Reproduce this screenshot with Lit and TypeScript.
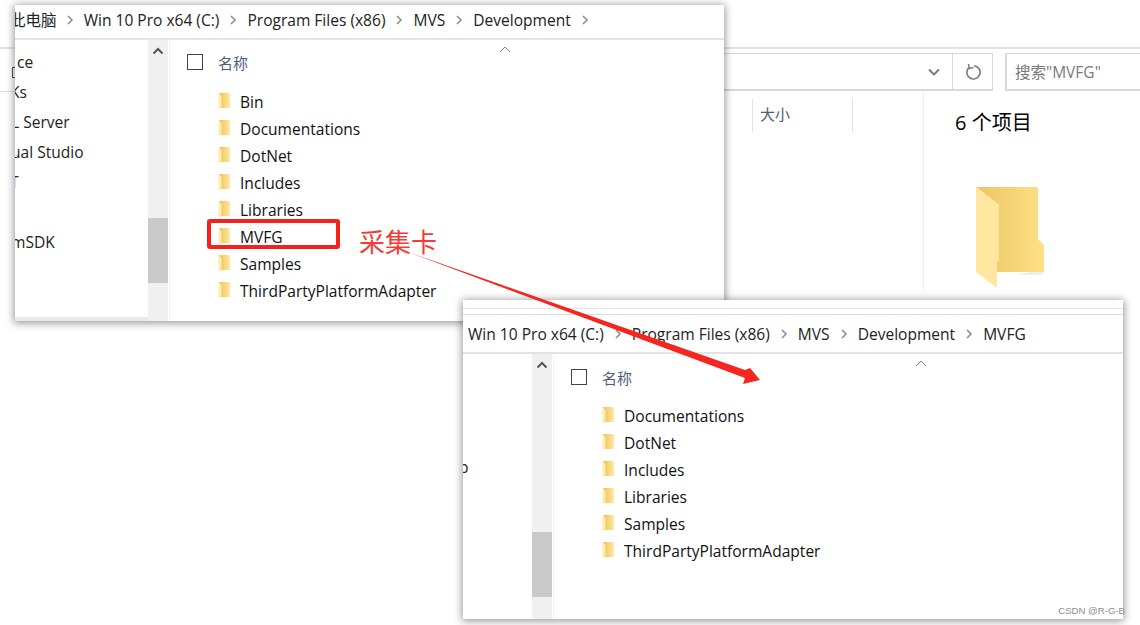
import { LitElement, html, css, svg } from "lit";
import { customElement } from "lit/decorators.js";

const smallFolder = html`<svg class="sf" viewBox="0 0 12 18" width="12" height="18">
  <defs><linearGradient id="sfg" x1="0" x2="1" y1="0" y2="0"><stop offset="0" stop-color="#edc04e"/><stop offset="1" stop-color="#ffe9a6"/></linearGradient></defs>
  <path d="M1 1 L11 1 L12 2 L12 16 L3 16 L3 5 Z" fill="url(#sfg)"/>
  <path d="M0.5 1 L3.5 4 L3.5 16 L2.5 16 L2.5 18 L0.5 16.5 Z" fill="#ffeab0"/>
</svg>`;

const chevron = html`<svg class="chev" viewBox="0 0 8 10" width="8" height="10"><path d="M2 1 L6 5 L2 9" fill="none" stroke="#8a8a8a" stroke-width="1.5"/></svg>`;
const upArrow = html`<svg viewBox="0 0 12 8" width="12" height="8"><path d="M1.5 6.5 L6 2 L10.5 6.5" fill="none" stroke="#555" stroke-width="2"/></svg>`;

@customElement("app-root")
export class AppRoot extends LitElement {
  static styles = css`
    :host { display: block; width: 1140px; height: 625px; position: relative; overflow: hidden; background: #fff;
      font-family: "Open Sans", "Noto Sans CJK SC", sans-serif; color: #1a1a1a; }
    .bg { position: absolute; inset: 0; display: flex; flex-direction: column; }
    .bg-top { height: 47px; flex: none; border-bottom: 2px solid #e3e3e3; box-sizing: content-box; }
    .bg-tools { height: 38px; margin-top: 4px; flex: none; display: flex; gap: 12px; padding-left: 724px; }
    .addr { width: 269px; flex: none; display: flex; justify-content: flex-end; border: 1px solid #d9d9d9; border-left: 0; box-sizing: border-box; border-width: 1px 1px 2px 0; }
    .addr-btn { width: 39px; display: flex; align-items: center; justify-content: center; }
    .addr-btn.d { padding-left: 3px; box-sizing: border-box; }
    .addr-btn.r { border-left: 1px solid #d9d9d9; }
    .search { flex: 1; border: 1px solid #d9d9d9; border-width: 1px 0 2px 2px; display: flex; align-items: center; padding-left: 8px; font-size: 15.5px; color: #7a7a7a; }
    .bg-body { flex: 1; display: flex; padding-left: 724px; }
    .cols { width: 200px; flex: none; border-right: 1px solid #f0f0f0; height: 200px; padding-top: 8px; box-sizing: border-box; display: flex; }
    .col-sep { height: 33px; border-left: 1px solid #e3e3e3; box-sizing: border-box; }
    .col-a { width: 28px; } .col-b { width: 100px; font-size: 15px; line-height: 18px; color: #4c607a; padding: 6px 0 0 7px; }
    .col-c { width: 60px; }
    .details { padding: 17px 0 0 31px; display: flex; flex-direction: column; }
    .count { font-size: 20px; line-height: 30px; color: #000; height: 55px; }
    .big { margin: 24px 0 0 21px; display: block; }

    .win { position: absolute; background: #fff; box-shadow: 0 1px 8px 1px rgba(0,0,0,.42); display: flex; flex-direction: column; overflow: hidden; }
    .a { left: 15px; top: 5px; width: 709px; height: 316px; }
    .b { left: 463px; top: 300px; width: 660px; height: 319px; }
    .stripes { height: 15px; flex: none; border-bottom: 1px solid #dcdcdc; position: relative; box-sizing: border-box; }
    .stripes::before { content: ""; position: absolute; left: 0; right: 0; top: 8px; height: 1px; background: #e4e4e4; }
    .crumbs { flex: none; display: flex; align-items: center; white-space: nowrap; font-size: 15.55px; border-bottom: 2px solid #e3e3e3; box-sizing: border-box; color: #222; gap: 10px; }
    .a .crumbs { height: 35px; padding-bottom: 4px; }
    .a .crumbs span:first-child { margin-left: -5px; margin-right: -1px; }
    .b .crumbs { height: 39px; padding-left: 5px; }
    .chev { flex: none; }
    .body { flex: 1; min-height: 0; display: flex; }
    .nav { flex: none; overflow: hidden; position: relative; font-size: 15.55px; color: #222; box-sizing: border-box; }
    .a .nav { width: 133px; border-bottom: 4px solid #e9e9e9; padding-top: 7px; }
    .b .nav { width: 69px; padding-top: 98px; }
    .nav div { height: 30px; line-height: 30px; white-space: nowrap; }
    .nav .c1 { margin-left: 2px; }
    .nav .c2 { margin-left: -4px; }
    .nav .c3 { margin-left: -5px; }
    .sb { flex: none; width: 20px; background: #f0f0f0; display: flex; flex-direction: column; align-items: center; border-right: 1px solid #fff; }
    .sb-arrow { height: 22px; display: flex; align-items: center; justify-content: center; flex: none; }
    .thumb { width: 100%; height: 65px; background: #c9c9c9; flex: none; }
    .a .thumb { margin-top: 156px; }
    .b .thumb { margin-top: 156px; }
    .list { flex: 1; min-width: 0; border-left: 1px solid #f2f2f2; position: relative; }
    .head { display: flex; align-items: center; padding-left: 17px; gap: 15px; font-size: 15px; color: #4c607a; position: relative; }
    .a .head { height: 44px; }
    .b .head { height: 46px; }
    .check { width: 16px; height: 16px; border: 1px solid #444; box-sizing: border-box; flex: none; }
    .sort { position: absolute; line-height: 0; top: 6px; }
    .a .sort { left: 329px; }
    .b .sort { left: 361px; }
    .rows { padding-left: 48px; }
    .a .rows { padding-top: 4px; }
    .b .rows { padding-top: 2px; }
    .row { height: 27px; display: flex; align-items: center; gap: 10px; font-size: 15.55px; color: #111; white-space: nowrap; }
    .sf { flex: none; margin-top: -1px; }

    .mark { position: absolute; left: 207px; top: 219px; width: 133px; height: 30px; border: 4px solid #f5211c; border-radius: 3px; box-sizing: border-box; }
    .note { position: absolute; left: 359px; top: 223px; font-size: 26px; line-height: 36px; color: #f43c36; font-family: "Noto Sans CJK SC", sans-serif; font-weight: 400; }
    .arrow { position: absolute; left: 0; top: 0; pointer-events: none; }
    .wm { position: absolute; right: 15px; top: 605px; font-size: 9.6px; color: #8c8c8c; font-family: "Liberation Sans", sans-serif; white-space: nowrap; }
    .stub { position: absolute; left: 0; top: 47px; width: 15px; height: 45px; border-bottom: 1px solid #dcdcdc; box-sizing: border-box; }
    .stub::after { content: ""; position: absolute; left: 12px; top: 20px; width: 3px; height: 11px; border-left: 1px solid #555; border-top: 1px solid #555; border-bottom: 1px solid #555; box-sizing: border-box; }
  `;

  crumbs(items: string[], endChevron: boolean) {
    return items.map((t, i) => html`<span>${t}</span>${i < items.length - 1 || endChevron ? chevron : ""}`);
  }

  rows(items: string[]) {
    return items.map((t) => html`<div class="row">${smallFolder}<span>${t}</span></div>`);
  }

  render() {
    return html`
      <div class="bg">
        <div class="bg-top"></div>
        <div class="bg-tools">
          <div class="addr">
            <div class="addr-btn d"><svg viewBox="0 0 12 8" width="12" height="8"><path d="M1 1.5 L6 6.5 L11 1.5" fill="none" stroke="#777" stroke-width="1.8"/></svg></div>
            <div class="addr-btn r"><svg viewBox="0 0 16 16" width="16" height="16"><path d="M9.2 1.8 A6.6 6.6 0 1 1 4.6 3" fill="none" stroke="#808080" stroke-width="1.7"/><path d="M3.5 0 L4.2 4.6 L8.6 3.6" fill="none" stroke="#808080" stroke-width="1.5"/></svg></div>
          </div>
          <div class="search">搜索"MVFG"</div>
        </div>
        <div class="bg-body">
          <div class="cols">
            <div class="col-a"></div>
            <div class="col-sep col-b">大小</div>
            <div class="col-sep col-c"></div>
          </div>
          <div class="details">
            <div class="count">6 个项目</div>
            <svg class="big" viewBox="0 0 68 102" width="68" height="102">
              <defs><linearGradient id="bf" x1="0" x2="1" y1="0" y2="0"><stop offset="0" stop-color="#eac765"/><stop offset="1" stop-color="#ffe085"/></linearGradient></defs>
              <path d="M40 88 L72 81 L66 88 Z" fill="#eeeeee"/>
              <path d="M0 0 L61 0 Q62 0 62 2 L62 52 L68 58 L68 85 L21 85 L21 75 L23 72 L23 18 Z" fill="url(#bf)"/>
              <path d="M0 0 L23 18 L23 72 L21 75 L21 101 L0 85 Z" fill="#ffe7a0"/>
            </svg>
          </div>
        </div>
      </div>
      <div class="stub"></div>

      <div class="win a">
        <div class="crumbs">${this.crumbs(["此电脑", "Win 10 Pro x64 (C:)", "Program Files (x86)", "MVS", "Development"], true)}</div>
        <div class="body">
          <div class="nav">
            <div class="c1">ce</div>
            <div class="c3">Ks</div>
            <div class="c2">L Server</div>
            <div class="c2">ual Studio</div>
            <div class="c3">T</div>
            <div></div>
            <div class="c2">mSDK</div>
          </div>
          <div class="sb"><div class="sb-arrow">${upArrow}</div><div class="thumb"></div></div>
          <div class="list">
            <div class="head"><span class="check"></span><span>名称</span>
              <span class="sort"><svg viewBox="0 0 12 7" width="12" height="7"><path d="M1 6 L6 1 L11 6" fill="none" stroke="#888" stroke-width="1"/></svg></span>
            </div>
            <div class="rows">${this.rows(["Bin", "Documentations", "DotNet", "Includes", "Libraries", "MVFG", "Samples", "ThirdPartyPlatformAdapter"])}</div>
          </div>
        </div>
      </div>

      <div class="win b">
        <div class="stripes"></div>
        <div class="crumbs">${this.crumbs(["Win 10 Pro x64 (C:)", "Program Files (x86)", "MVS", "Development", "MVFG"], false)}</div>
        <div class="body">
          <div class="nav"><div class="c2">p</div></div>
          <div class="sb"><div class="sb-arrow">${upArrow}</div><div class="thumb"></div></div>
          <div class="list">
            <div class="head"><span class="check"></span><span>名称</span>
              <span class="sort"><svg viewBox="0 0 12 7" width="12" height="7"><path d="M1 6 L6 1 L11 6" fill="none" stroke="#888" stroke-width="1"/></svg></span>
            </div>
            <div class="rows">${this.rows(["Documentations", "DotNet", "Includes", "Libraries", "Samples", "ThirdPartyPlatformAdapter"])}</div>
          </div>
        </div>
      </div>

      <div class="mark"></div>
      <div class="note">采集卡</div>
      <svg class="arrow" width="1140" height="625" viewBox="0 0 1140 625">
        ${svg`<polygon points="408,252 745,370 750,368 760,380 743,384 745,378" fill="#f5261f"/>`}
      </svg>
      <div class="wm">CSDN @R-G-B</div>
    `;
  }
}
